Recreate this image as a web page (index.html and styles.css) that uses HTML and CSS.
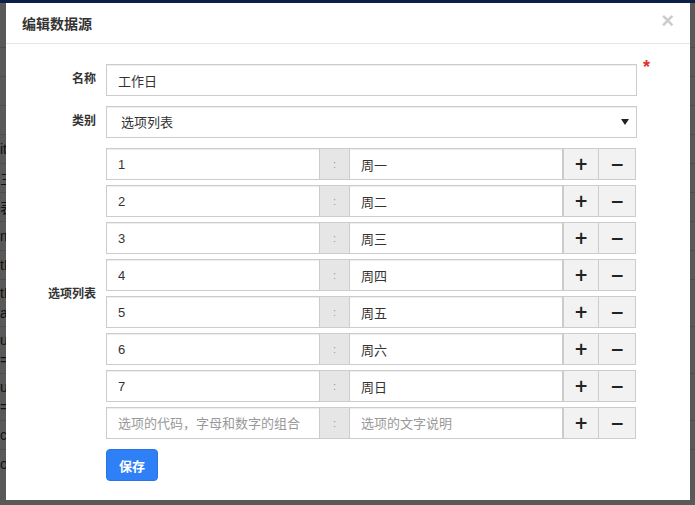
FILE: index.html
```html
<!DOCTYPE html>
<html lang="zh-CN">
<head>
  <meta charset="UTF-8">
  <title>编辑数据源</title>
  <link rel="stylesheet" href="styles.css">
</head>
<body>

<!-- page behind the dialog -->
<div class="page">
  <div class="topbar"></div>
  <table class="grid">
    <tr><td>&nbsp;</td></tr>
    <tr><td>&nbsp;</td></tr>
    <tr><td>&nbsp;</td></tr>
    <tr><td>it</td></tr>
    <tr><td>三</td></tr>
    <tr><td>表</td></tr>
    <tr><td>m</td></tr>
    <tr><td>tN</td></tr>
    <tr class="tall"><td>tN<br>al</td></tr>
    <tr class="tall"><td>ue<br>=</td></tr>
    <tr class="tall"><td>ue<br>=</td></tr>
    <tr><td>ct</td></tr>
    <tr><td>o</td></tr>
  </table>
</div>

<div class="backdrop"></div>

<div class="modal">
  <div class="modal-header">
    <h4>编辑数据源</h4>
    <span class="close">&times;</span>
  </div>

  <form class="modal-body">
    <div class="field">
      <label>名称</label>
      <input class="ctl" type="text" value="工作日">
      <span class="req">*</span>
    </div>

    <div class="field">
      <label>类别</label>
      <div class="select-wrap">
        <select class="ctl">
          <option>选项列表</option>
        </select>
      </div>
    </div>

    <div class="field center">
      <label>选项列表</label>
      <div class="options" id="options"></div>
    </div>

    <div class="field">
      <label></label>
      <div><button type="button" class="btn-save">保存</button></div>
    </div>
  </form>
</div>

<script>
  const items = [
    ["1", "周一"], ["2", "周二"], ["3", "周三"], ["4", "周四"],
    ["5", "周五"], ["6", "周六"], ["7", "周日"], ["", ""]
  ];

  const box = document.getElementById("options");
  items.forEach(([code, text]) => {
    const row = document.createElement("div");
    row.className = "opt-row";
    row.innerHTML =
      '<input class="ctl" type="text" placeholder="选项的代码，字母和数字的组合" value="' + code + '">' +
      '<span class="sep">:</span>' +
      '<input class="ctl" type="text" placeholder="选项的文字说明" value="' + text + '">' +
      '<button type="button" class="btn-op">+</button>' +
      '<button type="button" class="btn-op minus">&minus;</button>';
    box.appendChild(row);
  });
</script>

</body>
</html>
```

FILE: styles.css
```css
html, body {
  margin: 0;
  height: 100%;
  overflow: hidden;
}

body {
  font-family: "Liberation Sans", "Noto Sans CJK SC", sans-serif;
  font-size: 13px;
  color: #333;
  background: #fff;
}

/* background page */
.topbar {
  height: 3px;
  background: #215cc8;
}

.grid {
  border-collapse: collapse;
  width: 100%;
  margin-top: 44px;
  font-size: 14px;
  color: #333;
}

.grid td {
  border-top: 1px solid #ddd;
  height: 28px;
  padding: 0;
}

.grid tr.tall td {
  height: 46px;
  line-height: 20px;
}

.backdrop {
  position: fixed;
  inset: 0;
  background: rgba(0, 0, 0, 0.65);
}

/* dialog */
.modal {
  position: fixed;
  top: 3px;
  left: 6px;
  width: 684px;
  height: 497px;
  background: #fff;
}

.modal-header {
  height: 41px;
  border-bottom: 1px solid #e5e5e5;
  display: flex;
  align-items: center;
  justify-content: space-between;
  padding: 0 16px;
  box-sizing: border-box;
}

.modal-header h4 {
  margin: 0;
  font-size: 14px;
  font-weight: bold;
  color: #333;
}

.close {
  font-size: 22px;
  font-weight: bold;
  color: #000;
  opacity: 0.2;
  line-height: 1;
  margin-top: -4px;
}

.modal-body {
  padding: 20px 0 0;
  display: flex;
  flex-direction: column;
  gap: 10px;
}

.field {
  display: grid;
  grid-template-columns: 90px 531px 40px;
  column-gap: 10px;
  align-items: start;
}

.field > label {
  text-align: right;
  font-size: 12px;
  font-weight: bold;
  color: #333;
  padding-top: 7px;
  line-height: 16px;
}

.field.center {
  align-items: center;
}

.field.center > label {
  padding-top: 0;
}

.req {
  color: #e03131;
  font-size: 18px;
  font-weight: bold;
  line-height: 1;
  margin: -6px 0 0 -4px;
}

.ctl {
  display: block;
  width: 100%;
  height: 32px;
  box-sizing: border-box;
  border: 1px solid #ccc;
  box-shadow: inset 0 1px 1px rgba(0, 0, 0, 0.075);
  padding: 0 11px;
  font-family: inherit;
  font-size: 13px;
  color: #333;
  background: #fff;
  border-radius: 0;
  outline: none;
}

.ctl::placeholder {
  color: #999;
}

.select-wrap {
  position: relative;
}

.select-wrap select {
  appearance: none;
  -webkit-appearance: none;
  padding-left: 14px;
}

.select-wrap::after {
  content: "";
  position: absolute;
  right: 8px;
  top: 13px;
  border-left: 4px solid transparent;
  border-right: 4px solid transparent;
  border-top: 6px solid #222;
}

.options {
  display: flex;
  flex-direction: column;
  gap: 5px;
}

.opt-row {
  display: grid;
  grid-template-columns: 214px 29px 214px 36px 37px;
  height: 32px;
}

.sep {
  display: flex;
  align-items: center;
  justify-content: center;
  background: #e6e6e6;
  border-top: 1px solid #ccc;
  border-bottom: 1px solid #ccc;
  color: #999;
  font-size: 11px;
}

.btn-op {
  background: #f2f2f2;
  border: 1px solid #ccc;
  border-left: none;
  font-family: "DejaVu Sans", sans-serif;
  font-size: 17px;
  font-weight: bold;
  color: #222;
  padding: 0;
  line-height: 1;
}

.btn-op:first-of-type {
  border-left: 1px solid #ccc;
}

.btn-save {
  height: 32px;
  width: 52px;
  background: #2f80f7;
  border: 1px solid #2a75e6;
  border-radius: 4px;
  color: #fff;
  font-family: inherit;
  font-size: 13px;
  font-weight: bold;
  padding: 0;
}
```
